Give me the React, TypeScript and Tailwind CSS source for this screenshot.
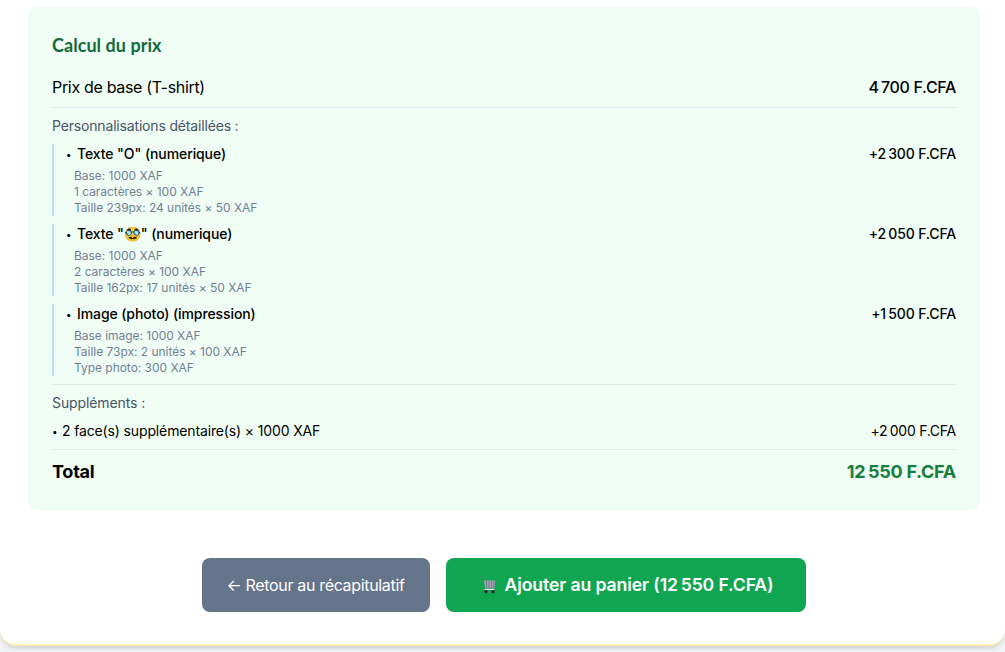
const nnbsp = "\u202f";

function Custom({
  title,
  price,
  lines,
}: {
  title: React.ReactNode;
  price: string;
  lines: string[];
}) {
  return (
    <div className="flex justify-between border-l-2 border-[#bfdbfe] pl-3 h-[72px]">
      <div>
        <div className="text-sm font-medium leading-5 tracking-[-0.1px] text-black">
          <span className="inline-block w-[11px] text-[10px] leading-none align-[1px]">•</span>
          {title}
        </div>
        <div className="mt-1 pl-2 text-xs leading-4 tracking-[-0.03px] text-[#718096]">
          {lines.map((l) => (
            <div key={l}>{l}</div>
          ))}
        </div>
      </div>
      <span className="text-sm font-medium leading-5 tracking-[-0.15px] text-black">{price}</span>
    </div>
  );
}

function CartIcon() {
  return (
    <svg viewBox="0 0 16 18" className="w-4 h-[18px] shrink-0">
      <path d="M1 1.5h2l1.5 3" fill="none" stroke="#6b7280" strokeWidth="1" />
      <path d="M4 4.5h11.5l-1 8H5z" fill="#9ca3af" />
      <path d="M6.5 5v7M9 5v7M11.5 5v7M14 5v7" stroke="#6b7280" strokeWidth="0.8" />
      <path d="M4.5 13.5h10" stroke="#e5e7eb" strokeWidth="1" />
      <circle cx="6" cy="15.8" r="1.7" fill="#1f2937" />
      <circle cx="13" cy="15.8" r="1.7" fill="#1f2937" />
    </svg>
  );
}

export default function App() {
  return (
    <div className="h-[652px] overflow-hidden bg-[#f3f4f6] font-['Inter',sans-serif]">
      <div className="h-[646px] bg-white rounded-b-2xl border-b-2 border-[#fdeeb5] shadow-md pt-[7px] px-7">
        <div className="w-[952px] h-[503px] rounded-lg bg-[#f0fdf4] px-6 pt-6">
          <h3 className="font-['Lato',sans-serif] font-bold text-lg leading-7 tracking-[0.05px] text-[#14693a]">
            Calcul du prix
          </h3>
          <div className="mt-[14px] flex justify-between items-center h-[27px] text-black">
            <span className="text-base tracking-[-0.32px]">Prix de base (T-shirt)</span>
            <span className="text-base font-medium tracking-[-0.33px]">4{nnbsp}700 F.CFA</span>
          </div>
          <div className="mt-[7px] border-t border-[#e2e8f0]" />
          <div className="mt-2 text-sm leading-5 tracking-[-0.17px] text-[#475569]">Personnalisations détaillées :</div>
          <div className="mt-2 flex flex-col gap-2">
            <Custom
              title={'Texte "O" (numerique)'}
              price={`+2${nnbsp}300 F.CFA`}
              lines={["Base: 1000 XAF", "1 caractères × 100 XAF", "Taille 239px: 24 unités × 50 XAF"]}
            />
            <Custom
              title={'Texte "🥸" (numerique)'}
              price={`+2${nnbsp}050 F.CFA`}
              lines={["Base: 1000 XAF", "2 caractères × 100 XAF", "Taille 162px: 17 unités × 50 XAF"]}
            />
            <Custom
              title="Image (photo) (impression)"
              price={`+1${nnbsp}500 F.CFA`}
              lines={["Base image: 1000 XAF", "Taille 73px: 2 unités × 100 XAF", "Type photo: 300 XAF"]}
            />
          </div>
          <div className="mt-2 border-t border-[#e5e7eb]" />
          <div className="mt-2 text-sm leading-5 tracking-[-0.1px] text-[#475569]">Suppléments :</div>
          <div className="mt-2 flex justify-between text-sm leading-5 tracking-[-0.14px] text-black">
            <span>
              <span className="inline-block w-[10px] text-[10px] leading-none align-[1px]">•</span>
              2 face(s) supplémentaire(s) × 1000 XAF
            </span>
            <span className="tracking-[-0.25px]">+2{nnbsp}000 F.CFA</span>
          </div>
          <div className="mt-2 border-t border-[#e5e7eb]" />
          <div className="mt-2 flex justify-between items-center text-lg font-bold leading-7 tracking-[-0.25px]">
            <span className="text-black">Total</span>
            <span className="text-[#15803d]">12{nnbsp}550 F.CFA</span>
          </div>
        </div>
        <div className="mt-12 flex justify-center gap-4 pl-[2px]">
          <button className="w-[228px] h-[54px] rounded-lg bg-[#64748b] text-white text-base tracking-[-0.33px]">
            ← Retour au récapitulatif
          </button>
          <button className="w-[360px] h-[54px] pl-[3px] rounded-lg bg-[#10a551] text-white text-[17.6px] font-semibold tracking-[-0.1px] flex items-center justify-center gap-2">
            <CartIcon />
            <span>Ajouter au panier (12{nnbsp}550 F.CFA)</span>
          </button>
        </div>
      </div>
    </div>
  );
}
